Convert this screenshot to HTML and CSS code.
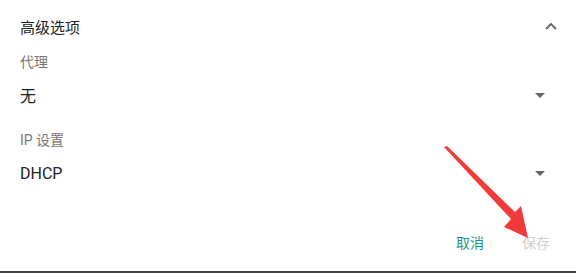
FILE: index.html
```html
<!DOCTYPE html>
<html lang="zh-CN">
<head>
<meta charset="utf-8">
<link rel="stylesheet" href="styles.css">
</head>
<body>
<div class="panel">
  <div class="header">
    <span class="title">高级选项</span>
    <svg class="chev" width="12" height="8" viewBox="0 0 12 8"><path d="M1 7 L6 2 L11 7" fill="none" stroke="#666" stroke-width="1.8"/></svg>
  </div>
  <div class="label">代理</div>
  <div class="select">
    <span class="value">无</span>
    <svg class="tri" width="10" height="5" viewBox="0 0 10 5"><path d="M0 0 H10 L5 5 Z" fill="#666"/></svg>
  </div>
  <div class="label label2">IP 设置</div>
  <div class="select">
    <span class="value">DHCP</span>
    <svg class="tri" width="10" height="5" viewBox="0 0 10 5"><path d="M0 0 H10 L5 5 Z" fill="#666"/></svg>
  </div>
  <div class="actions">
    <span class="btn cancel">取消</span>
    <span class="btn save">保存</span>
  </div>
  <svg class="arrow" width="576" height="273" viewBox="0 0 576 273">
    <path d="M444 147 L447 146 L515 212 L521 206 L528 238 L504 227 L511 219 Z" fill="#f23a3a"/>
  </svg>
</div>
</body>
</html>
```
FILE: styles.css
```css
html, body {
  margin: 0;
  padding: 0;
  background: #fff;
}
body {
  width: 576px;
  height: 273px;
  overflow: hidden;
  font-family: Roboto, "Noto Sans CJK SC", sans-serif;
}
.panel {
  position: relative;
  box-sizing: border-box;
  height: 273px;
  padding: 0 19px 0 20px;
  border-bottom: 2px solid #444;
  display: flex;
  flex-direction: column;
}
.header {
  height: 52px;
  display: flex;
  align-items: center;
  justify-content: space-between;
}
.title {
  font-size: 15px;
  color: #222;
}
.label {
  height: 17px;
  display: flex;
  align-items: center;
  font-size: 14px;
  color: #777;
}
.label2 {
  margin-top: 9px;
}
.select {
  height: 52px;
  display: flex;
  align-items: center;
  justify-content: space-between;
}
.value {
  font-size: 16px;
  color: #222;
}
.tri {
  margin-right: 12px;
}
.actions {
  margin-top: auto;
  height: 58px;
  display: flex;
  justify-content: flex-end;
  align-items: center;
  gap: 38px;
  padding-right: 7px;
}
.btn {
  font-size: 14px;
}
.cancel {
  color: #1f9585;
}
.save {
  color: #cfcfcf;
}
.arrow {
  position: absolute;
  left: 0;
  top: 0;
  pointer-events: none;
}
```
